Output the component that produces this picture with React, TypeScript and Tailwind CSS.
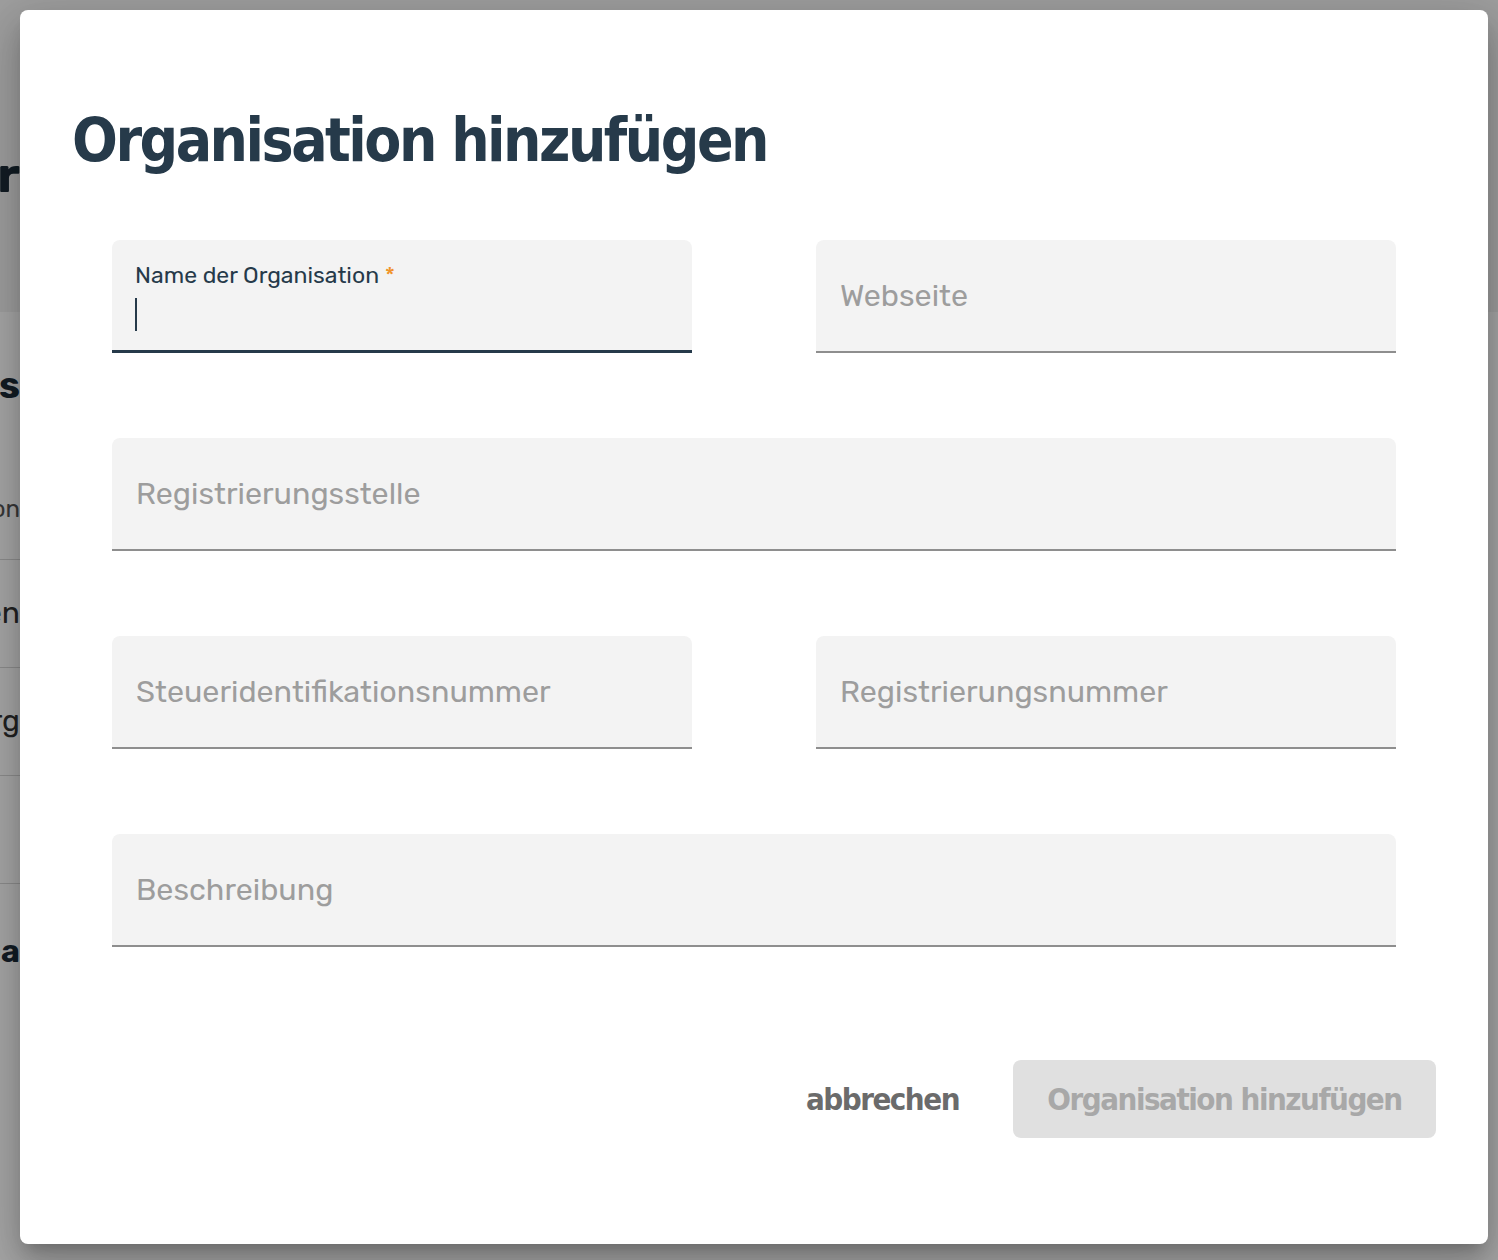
import React from "react";

const sans = "font-['Rubik','Open_Sans','Noto_Sans',sans-serif]";
const cond = "font-['DejaVu_Sans_Condensed','DejaVu_Sans',sans-serif]";

function Field({
  placeholder,
  className = "",
}: {
  placeholder: string;
  className?: string;
}) {
  return (
    <div
      className={`h-[113px] rounded-t-[8px] bg-[#f3f3f3] border-b-[2px] border-[#8e8e8e] flex items-center px-[24px] ${className}`}
    >
      <span className={`${sans} text-[30.5px] text-[#9d9d9d]`}>
        {placeholder}
      </span>
    </div>
  );
}

export default function App() {
  return (
    <div className="relative w-[1498px] h-[1260px] overflow-hidden bg-white">
      {/* Underlying page (mostly hidden by the dialog) */}
      <div className="flex flex-col w-full h-full">
        <div className="h-[312px] bg-[#f3f3f3] flex flex-col">
          <div className="w-[20px] overflow-hidden flex justify-end mt-[150px]">
            <span className={`${sans} whitespace-nowrap text-[50px] font-bold text-[#1c2c38] leading-none`}>
              Partner
            </span>
          </div>
        </div>
        <div className="w-[20px] overflow-hidden flex flex-col">
          <div className="h-[146px] flex justify-end items-center">
            <span className={`${sans} whitespace-nowrap text-[38px] font-bold text-[#1c2c38]`}>Organisations</span>
          </div>
          <div className="h-[102px] flex justify-end items-center border-b border-[#d8d8d8]">
            <span className={`${sans} whitespace-nowrap text-[24px] text-[#555]`}>Organisation</span>
          </div>
          <div className="h-[108px] flex justify-end items-center border-b border-[#d8d8d8]">
            <span className={`${sans} whitespace-nowrap text-[30px] text-[#333]`}>Firmen</span>
          </div>
          <div className="h-[108px] flex justify-end items-center border-b border-[#d8d8d8]">
            <span className={`${sans} whitespace-nowrap text-[30px] text-[#333]`}>Org</span>
          </div>
          <div className="h-[108px] flex justify-end items-center border-b border-[#d8d8d8]"></div>
          <div className="h-[134px] flex justify-end items-center">
            <span className={`${sans} whitespace-nowrap text-[32px] font-bold text-[#1c2c38]`}>Ga</span>
          </div>
        </div>
      </div>

      {/* Backdrop */}
      <div className="absolute inset-0 bg-black/[0.35]" />

      {/* Dialog */}
      <div className="absolute left-[20px] top-[10px] w-[1468px] h-[1234px] bg-white rounded-[8px] shadow-[0_11px_15px_-7px_rgba(0,0,0,0.2),0_24px_38px_3px_rgba(0,0,0,0.14),0_9px_46px_8px_rgba(0,0,0,0.12)] flex flex-col px-[52px]">
        <h1 className={`${cond} mt-[92px] text-[60px] leading-[76px] text-[#263a4a] font-bold tracking-[-2.5px]`}>
          Organisation hinzufügen
        </h1>

        <div className="mt-[62px] px-[40px] flex flex-col gap-[85px]">
          <div className="grid grid-cols-2 gap-x-[124px]">
            <div className="h-[113px] rounded-t-[8px] bg-[#f3f3f3] border-b-[3px] border-[#263a4a] flex flex-col px-[23px] pt-[20px]">
              <div className={`${sans} text-[23px] leading-[30px] text-[#263a4a]`}>
                Name der Organisation <span className="text-[#f0932b]">*</span>
              </div>
              <div className="mt-[8px] w-[2px] h-[33px] bg-[#263a4a]" />
            </div>
            <Field placeholder="Webseite" />
          </div>
          <Field placeholder="Registrierungsstelle" />
          <div className="grid grid-cols-2 gap-x-[124px]">
            <Field placeholder="Steueridentifikationsnummer" />
            <Field placeholder="Registrierungsnummer" />
          </div>
          <Field placeholder="Beschreibung" />
        </div>

        <div className="mt-[113px] flex justify-end items-center gap-[54px]">
          <button className={`${cond} text-[31px] text-[#6b6b6b] font-bold tracking-[-1.5px]`}>abbrechen</button>
          <button className={`${cond} h-[78px] w-[423px] rounded-[8px] bg-[#e0e0e0] text-[31px] text-[#a8a8a8] font-bold tracking-[-1.5px]`}>
            Organisation hinzufügen
          </button>
        </div>
      </div>
    </div>
  );
}
